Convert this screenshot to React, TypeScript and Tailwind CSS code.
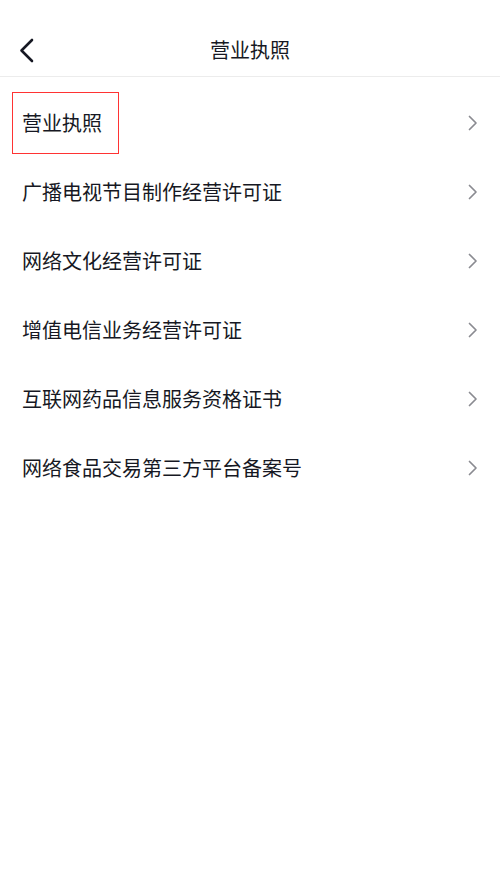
const items = [
  '营业执照',
  '广播电视节目制作经营许可证',
  '网络文化经营许可证',
  '增值电信业务经营许可证',
  '互联网药品信息服务资格证书',
  '网络食品交易第三方平台备案号',
];

function Chevron() {
  return (
    <svg width="10" height="16" viewBox="0 0 10 16" fill="none" className="shrink-0">
      <path d="M1.5 1.5L8 8L1.5 14.5" stroke="#8a8b91" strokeWidth="1.7" strokeLinecap="round" strokeLinejoin="round" />
    </svg>
  );
}

export default function App() {
  return (
    <div
      className="relative min-h-[889px] w-[500px] bg-white text-[#161823]"
      style={{ fontFamily: '"Noto Sans CJK SC", "Noto Sans", sans-serif' }}
    >
      <header className="relative flex h-[77px] items-center justify-center border-b border-[#ececec] pt-[24px]">
        <button className="absolute left-[16px] top-[36px] p-[2px]">
          <svg width="18" height="26" viewBox="0 0 18 26" fill="none">
            <path d="M14 2L3.5 12.5L14 23" stroke="#161823" strokeWidth="2.6" strokeLinecap="round" strokeLinejoin="round" />
          </svg>
        </button>
        <h1 className="text-[20px] leading-none font-normal">营业执照</h1>
      </header>
      <ul className="pt-[11px]">
        {items.map((item, i) => (
          <li key={item} className="relative flex h-[69px] items-center justify-between pl-[22px] pr-[22px]">
            <span className="text-[20px] leading-none">{item}</span>
            <Chevron />
            {i === 0 && (
              <div className="pointer-events-none absolute left-[12px] top-[4px] h-[62px] w-[107px] border border-[#f33]" />
            )}
          </li>
        ))}
      </ul>
    </div>
  );
}
